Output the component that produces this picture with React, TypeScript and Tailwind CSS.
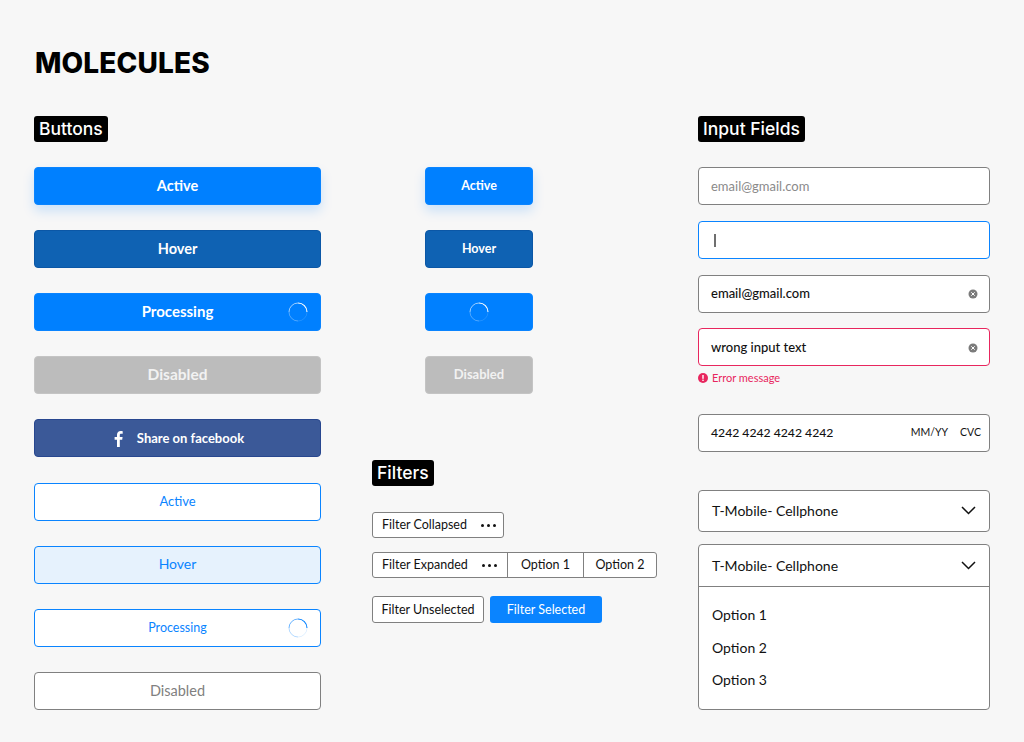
import React from 'react';

const Spinner = ({ color }: { color: string }) => (
  <svg width="20" height="20" viewBox="0 0 20 20" fill="none" className="block">
    <path d="M10 19a9 9 0 0 1-9-9" stroke={color} strokeOpacity="0.3" strokeWidth="1" />
    <path d="M19 10a9 9 0 0 1-9 9" stroke={color} strokeOpacity="0.12" strokeWidth="1" />
    <path d="M10 1a9 9 0 0 1 9 9" stroke={color} strokeWidth="1.1" />
    <path d="M1 10a9 9 0 0 1 9-9" stroke={color} strokeOpacity="0.6" strokeWidth="1" />
  </svg>
);

const Chevron = () => (
  <svg width="15" height="9" viewBox="0 0 15 9" fill="none" className="block">
    <path d="M1 1l6.5 6.5L14 1" stroke="#111" strokeWidth="1.5" />
  </svg>
);

const SectionTag = ({ children }: { children: React.ReactNode }) => (
  <div className="inline-flex h-[26px] items-center rounded-[3px] bg-black px-[5px] font-['Inter',sans-serif] text-[17.5px] leading-none font-medium text-white">
    {children}
  </div>
);

const solidBase =
  "relative flex h-[38px] items-center justify-center rounded-[4px] border font-['Lato',sans-serif] font-bold";
const outlineBase =
  "relative flex h-[38px] items-center justify-center rounded-[4px] border font-['Lato',sans-serif]";
const fieldBase =
  "flex h-[38px] items-center rounded-[4px] border bg-white pl-3 pr-2 font-['Lato',sans-serif] text-[13px]";
const filterBase =
  "flex h-[26px] items-center rounded-[3px] border border-[#808080] bg-white font-['Lato',sans-serif] text-[12.5px] text-[#111]";

const ClearIcon = () => (
  <svg width="10" height="10" viewBox="0 0 10 10" className="mr-[3px] ml-auto block">
    <circle cx="5" cy="5" r="4.5" fill="#7b7b7b" />
    <path d="M3.3 3.3l3.4 3.4M6.7 3.3l-3.4 3.4" stroke="#fff" strokeWidth="1" />
  </svg>
);

const Dots = () => (
  <span className="flex items-center gap-[3px]">
    <span className="h-[3px] w-[3px] rounded-full bg-[#111]" />
    <span className="h-[3px] w-[3px] rounded-full bg-[#111]" />
    <span className="h-[3px] w-[3px] rounded-full bg-[#111]" />
  </span>
);

export default function App() {
  return (
    <div className="h-[742px] w-[1024px] overflow-hidden bg-[#f7f7f7] px-[34px] pt-[46px]">
      <h1 className="h-[34px] pl-px font-['Inter',sans-serif] text-[28px] leading-[34px] font-extrabold tracking-[0.15px] text-black">
        MOLECULES
      </h1>

      <div className="mt-[36px] flex">
        {/* left column */}
        <div className="w-[287px]">
          <SectionTag>Buttons</SectionTag>
          <div className="mt-[25px] flex flex-col gap-[25px]">
            <div className={`${solidBase} border-[#0a84ff] bg-[#0080ff] pb-px text-[14.5px] text-white shadow-[0_6px_12px_rgba(0,128,255,0.18)]`}>Active</div>
            <div className={`${solidBase} border-[#0b57a6] bg-[#0f62b3] pb-px text-[14.5px] text-white`}>Hover</div>
            <div className={`${solidBase} border-[#0a84ff] bg-[#0080ff] pb-[2px] text-[15px] text-white`}>
              Processing
              <span className="absolute top-[8px] right-[12px]"><Spinner color="#ffffff" /></span>
            </div>
            <div className={`${solidBase} border-[#c4c4c4] bg-[#bcbcbc] pb-px text-[15.5px] text-[#f2f2f2]`}>Disabled</div>
            <div className={`${solidBase} gap-[14px] border-[#28478f] bg-[#3b5998] pt-[2px] pl-[3px] text-[13px] text-white`}>
              <svg width="9" height="16" viewBox="0 0 9 16" className="block">
                <path fill="#fff" d="M5.8 16V8.7h2.4l.4-2.8H5.8V4.1c0-.8.2-1.4 1.4-1.4h1.5V.2C8.4.1 7.6 0 6.6 0 4.5 0 3 1.3 3 3.8v2.1H.6v2.8H3V16h2.8z" />
              </svg>
              Share on facebook
            </div>
            <div className={`${outlineBase} mt-px border-[#0a84ff] bg-white text-[13px] text-[#0a84ff]`}>Active</div>
            <div className={`${outlineBase} border-[#0a84ff] bg-[#e6f2fd] pb-[3px] text-[14px] text-[#0a84ff]`}>Hover</div>
            <div className={`${outlineBase} border-[#0a84ff] bg-white pt-px text-[12.5px] text-[#0a84ff]`}>
              Processing
              <span className="absolute top-[8px] right-[12px]"><Spinner color="#0a84ff" /></span>
            </div>
            <div className={`${outlineBase} border-[#808080] bg-white pb-px text-[14.5px] text-[#808080]`}>Disabled</div>
          </div>
        </div>

        {/* middle column */}
        <div className="ml-[51px] w-[285px] pt-[51px]">
          <div className="ml-[53px] flex w-[108px] flex-col gap-[25px]">
            <div className={`${solidBase} border-[#0a84ff] bg-[#0080ff] text-[12.5px] text-white shadow-[0_6px_12px_rgba(0,128,255,0.18)]`}>Active</div>
            <div className={`${solidBase} border-[#0b57a6] bg-[#0f62b3] text-[12.5px] text-white`}>Hover</div>
            <div className={`${solidBase} border-[#0a84ff] bg-[#0080ff]`}><Spinner color="#ffffff" /></div>
            <div className={`${solidBase} border-[#c4c4c4] bg-[#bcbcbc] text-[13px] text-[#f2f2f2]`}>Disabled</div>
          </div>

          <div className="mt-[66px]">
            <SectionTag>Filters</SectionTag>
          </div>

          <div className={`${filterBase} mt-[26px] w-[132px] pl-[9px]`}>
            Filter Collapsed
            <span className="ml-auto pr-[7px]"><Dots /></span>
          </div>

          <div className={`${filterBase} mt-[14px] w-[285px]`}>
            <div className="flex h-full w-[135px] items-center border-r border-[#808080] pl-[9px]">
              Filter Expanded
              <span className="ml-auto pr-[10px]"><Dots /></span>
            </div>
            <div className="flex h-full w-[76px] items-center justify-center border-r border-[#808080]">Option 1</div>
            <div className="flex h-full flex-1 items-center justify-center">Option 2</div>
          </div>

          <div className="mt-[18px] flex gap-[6px]">
            <div className={`${filterBase} h-[27px] w-[112px] justify-center pt-px`}>Filter Unselected</div>
            <div className="flex h-[27px] w-[112px] items-center justify-center rounded-[3px] bg-[#0a84ff] pt-px font-['Lato',sans-serif] text-[12.5px] text-white">Filter Selected</div>
          </div>
        </div>

        {/* right column */}
        <div className="ml-[41px] w-[292px]">
          <SectionTag>Input Fields</SectionTag>
          <div className={`${fieldBase} mt-[25px] border-[#808080] pt-px text-[#8a8a8a]`}>email@gmail.com</div>
          <div className={`${fieldBase} mt-4 border-[#0a84ff]`}>
            <span className="ml-[3px] h-[13px] w-[2px] bg-[#6f6f6f]" />
          </div>
          <div className={`${fieldBase} mt-4 border-[#808080] font-medium text-[#111]`}>
            email@gmail.com
            <ClearIcon />
          </div>
          <div className={`${fieldBase} mt-[15px] border-[#e8265e] pt-px font-medium text-[#111]`}>
            wrong input text
            <ClearIcon />
          </div>
          <div className="mt-[5px] flex h-[13px] items-center gap-1 font-['Lato',sans-serif] text-[11px] leading-none text-[#e8265e]">
            <svg width="10" height="10" viewBox="0 0 10 10" className="block">
              <circle cx="5" cy="5" r="5" fill="#e8265e" />
              <rect x="4.3" y="2" width="1.4" height="3.8" fill="#fff" />
              <rect x="4.3" y="6.6" width="1.4" height="1.4" fill="#fff" />
            </svg>
            Error message
          </div>
          <div className={`${fieldBase} mt-[30px] border-[#808080] text-[#111]`}>
            <span className="text-[12.2px] font-medium">4242 4242 4242 4242</span>
            <span className="ml-auto text-[10.5px]">MM/YY</span>
            <span className="ml-[12px] text-[10.5px]">CVC</span>
          </div>

          <div className="mt-[38px] flex h-[42px] items-center justify-between rounded-[4px] border border-[#808080] bg-white pr-[13px] pb-[2px] pl-[13px] font-['Lato',sans-serif] text-[14px] text-[#111]">
            T-Mobile- Cellphone
            <Chevron />
          </div>

          <div className="mt-3 rounded-[4px] border border-[#808080] bg-white font-['Lato',sans-serif] text-[14px] text-[#111]">
            <div className="flex h-[42px] items-center justify-between border-b border-[#808080] pr-[13px] pb-px pl-[13px]">
              T-Mobile- Cellphone
              <Chevron />
            </div>
            <div className="flex flex-col gap-[12.5px] pt-[18px] pb-[19px] pl-[13px] leading-[20px]">
              <div>Option 1</div>
              <div>Option 2</div>
              <div>Option 3</div>
            </div>
          </div>
        </div>
      </div>
    </div>
  );
}
